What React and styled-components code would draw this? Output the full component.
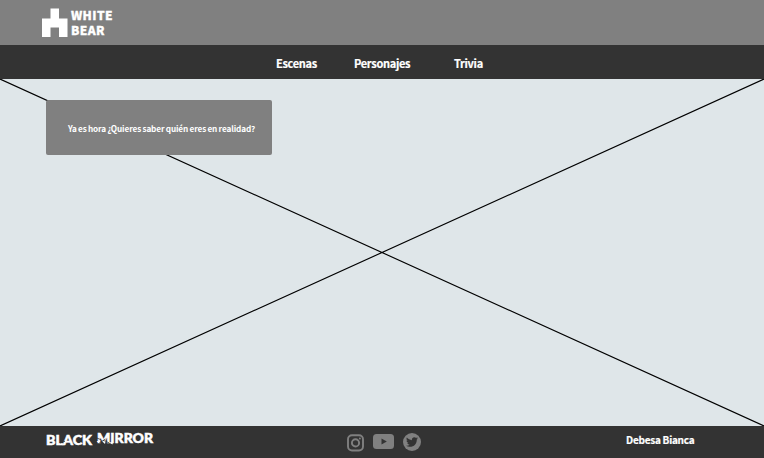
import React from "react";
import styled, { createGlobalStyle } from "styled-components";
import { FaTwitter } from "react-icons/fa";

const GlobalStyle = createGlobalStyle`
  * { box-sizing: border-box; }
  body { margin: 0; overflow: hidden; }
`;

const Page = styled.div`
  display: grid;
  grid-template-rows: 45px 34px 347px 32px;
  width: 764px;
  height: 458px;
  background: #333333;
  color: #ffffff;
  font-family: "Noto Sans CJK SC", "Noto Sans", sans-serif;
  font-weight: 700;
`;

const Header = styled.header`
  display: flex;
  align-items: flex-start;
  gap: 3px;
  padding: 8px 0 0 41px;
  background: #808080;
`;

const BrandMark = styled.svg`
  width: 27px;
  height: 30px;
`;

const BrandName = styled.div`
  font-size: 12px;
  font-weight: 900;
  line-height: 14.5px;
  letter-spacing: 0.4px;
  white-space: pre-line;
  -webkit-text-stroke: 0.3px #ffffff;
`;

const Nav = styled.nav`
  display: flex;
  align-items: center;
  padding: 2px 0 0 276px;
  background: #333333;
`;

const NavLink = styled.a`
  width: ${({ $width }) => $width}px;
  font-size: 11px;
  letter-spacing: -0.3px;
  line-height: 18px;
  white-space: nowrap;
  -webkit-text-stroke: 0.2px #ffffff;
`;

const Hero = styled.main`
  display: grid;
  background: #dfe6e9;
`;

const Cross = styled.svg`
  grid-area: 1 / 1;
  width: 764px;
  height: 347px;
`;

const Prompt = styled.section`
  grid-area: 1 / 1;
  display: flex;
  align-items: center;
  width: 226px;
  height: 55px;
  margin: 21px 0 0 46px;
  padding: 1px 0 0 22px;
  border-radius: 2px;
  background: #808080;
  font-size: 8.2px;
  letter-spacing: -0.11px;
  word-spacing: -0.4px;
  line-height: 14px;
  white-space: nowrap;
`;

const Footer = styled.footer`
  display: grid;
  grid-template-columns: 301px 279px 184px;
  align-items: start;
  background: #333333;
`;

const ShowLogo = styled.svg`
  width: 112px;
  height: 20px;
  margin: 4px 0 0 44px;
`;

const Socials = styled.div`
  display: flex;
  align-items: center;
  height: 20px;
  margin: 6px 0 0 46px;
  color: #808080;
`;

const SocialIcon = styled.svg`
  width: ${({ $width }) => $width}px;
  height: ${({ $height }) => $height}px;
  margin-top: ${({ $top }) => $top || 0}px;
  margin-right: 9px;
`;

const RoundBadge = styled.span`
  display: grid;
  place-items: center;
  width: 18px;
  height: 18px;
  margin-top: -1px;
  border-radius: 50%;
  background: #808080;
  color: #333333;
  font-size: 12px;
`;

const Author = styled.div`
  padding: 5px 0 0 46px;
  font-size: 10px;
  letter-spacing: -0.25px;
  line-height: 18px;
  -webkit-text-stroke: 0.2px #ffffff;
`;

const links = [
  { label: "Escenas", width: 78 },
  { label: "Personajes", width: 100 },
  { label: "Trivia", width: 40 },
];

export default function App() {
  return (
    <>
      <GlobalStyle />
      <Page>
        <Header>
          <BrandMark viewBox="0 0 27 30" aria-hidden="true">
            <path d="M9.5 0.5h8.5v10h8.5v18.5h-8.5v-9.5h-8.5v9.5h-8.5v-18.5h8.5z" fill="#fff" />
          </BrandMark>
          <BrandName>{"WHITE\nBEAR"}</BrandName>
        </Header>
        <Nav>
          {links.map(({ label, width }) => (
            <NavLink key={label} $width={width}>{label}</NavLink>
          ))}
        </Nav>
        <Hero>
          <Cross viewBox="0 0 764 347" aria-hidden="true">
            <path d="M0 0L764 347M0 347L764 0" stroke="#000" strokeWidth="1.15" />
          </Cross>
          <Prompt>Ya es hora ¿Quieres saber quién eres en realidad?</Prompt>
        </Hero>
        <Footer>
          <ShowLogo viewBox="0 0 112 20" role="img" aria-label="Black Mirror">
            <g fill="#fff" stroke="#fff" strokeWidth="0.5" fontFamily="Lato, sans-serif" fontWeight="900" fontSize="12.5">
              <text x="2" y="14.8" textLength="46" lengthAdjust="spacingAndGlyphs">BLACK</text>
              <text x="53" y="13.4" textLength="56" lengthAdjust="spacingAndGlyphs">MIRROR</text>
            </g>
            <path d="M16 13L21 11.2M52 7.7L57 9.7M54.5 13.5L61.5 9M59 10.3L65 12.8" fill="none" stroke="#333333" strokeWidth="0.8" />
            <path d="M52.5 11.3L56 10.6L55 13.3ZM59 12L61.5 11.3L61 14ZM65 12.5L69 12L68.5 14.4Z" fill="#fff" />
          </ShowLogo>
          <Socials>
            <SocialIcon $width={17} $height={18} $top={1} viewBox="0 0 17 18" aria-label="Instagram">
              <rect x="1" y="1.2" width="15" height="15.3" rx="4" fill="none" stroke="currentColor" strokeWidth="1.9" />
              <circle cx="8.5" cy="8.9" r="3.6" fill="none" stroke="currentColor" strokeWidth="1.9" />
              <circle cx="12.9" cy="4.5" r="1" fill="currentColor" />
            </SocialIcon>
            <SocialIcon $width={21} $height={15} $top={-1} viewBox="0 0 21 15" aria-label="YouTube">
              <rect width="21" height="15" rx="3.5" fill="currentColor" />
              <path d="M8.5 4.4L13.8 7.5L8.5 10.6Z" fill="#333333" />
            </SocialIcon>
            <RoundBadge><FaTwitter aria-label="Twitter" /></RoundBadge>
          </Socials>
          <Author>Debesa Bianca</Author>
        </Footer>
      </Page>
    </>
  );
}
